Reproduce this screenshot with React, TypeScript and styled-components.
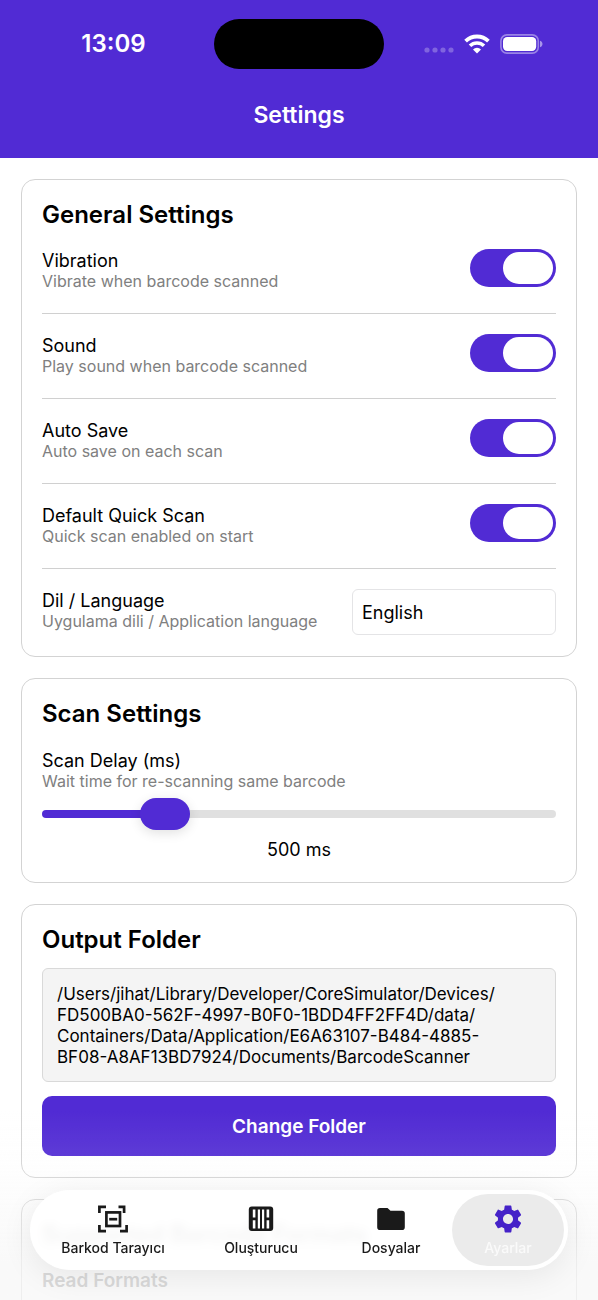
import React, { useState } from "react";
import styled, { createGlobalStyle } from "styled-components";

const PURPLE = "#512bd4";

const GlobalStyle = createGlobalStyle`
  * { box-sizing: border-box; }
  body {
    margin: 0;
    background: #fff;
    color: #000;
    font-family: Inter, "Liberation Sans", sans-serif;
  }
  button, input, select { font: inherit; }
`;

const Screen = styled.div`
  height: 100vh;
  display: flex;
  flex-direction: column;
`;

const Header = styled.header`
  flex: none;
  background: ${PURPLE};
  color: #fff;
`;

const StatusBar = styled.div`
  display: grid;
  grid-template-columns: 1fr 170px 1fr;
  align-items: center;
  padding: 19px 0 3px;
`;

const Clock = styled.time`
  justify-self: center;
  padding-left: 13px;
  font-size: 24px;
  line-height: 30px;
  font-weight: 600;
`;

const Island = styled.div`
  height: 50px;
  border-radius: 25px;
  background: #000;
`;

const StatusIcons = styled.div`
  justify-self: end;
  display: flex;
  align-items: center;
  gap: 10px;
  padding-right: 55px;

  svg { display: block; }
`;

const PageTitle = styled.h1`
  margin: 0;
  padding: 28px 0;
  text-align: center;
  font-size: 23px;
  line-height: 30px;
  font-weight: 600;
`;

const Content = styled.main`
  flex: 1;
  min-height: 0;
  overflow-y: auto;
  scrollbar-width: none;
  display: flex;
  flex-direction: column;
  gap: 21px;
  padding: 21px;
`;

const Card = styled.section`
  flex: none;
  padding: 20px 20px 21px;
  border: 1px solid #d3d3d3;
  border-radius: 14px;
  background: #fff;
`;

const CardTitle = styled.h2`
  margin: 0;
  font-size: 24px;
  line-height: 29px;
  font-weight: 600;
`;

const Row = styled.div<{ $last?: boolean }>`
  display: flex;
  align-items: flex-start;
  justify-content: space-between;
  padding: ${(p) => (p.$last ? "20px 0 0" : "20px 0 21px")};
  border-bottom: ${(p) => (p.$last ? "0" : "1px solid #d0d0d0")};
`;

const Labels = styled.label`
  display: block;
  padding-top: 1px;
`;

const Name = styled.span`
  display: block;
  font-size: 18px;
  line-height: 21px;
`;

const Hint = styled.span`
  display: block;
  font-size: 16px;
  line-height: 21px;
  color: #808080;
`;

const Toggle = styled.input`
  appearance: none;
  flex: none;
  display: flex;
  justify-content: flex-start;
  width: 86px;
  height: 38px;
  margin: 0;
  padding: 3px;
  border-radius: 19px;
  background: #d8d8dc;

  &::before {
    content: "";
    width: 50px;
    height: 32px;
    border-radius: 16px;
    background: #fff;
  }

  &:checked {
    justify-content: flex-end;
    background: ${PURPLE};
  }
`;

const Select = styled.select`
  appearance: none;
  width: 204px;
  height: 46px;
  padding: 0 9px;
  border: 1px solid #e4e4e6;
  border-radius: 6px;
  background: #fff;
  color: #000;
  font-size: 18px;
`;

const Field = styled.div`
  display: flex;
  flex-direction: column;
  padding-top: 21px;
`;

const Range = styled.input<{ $fill: number }>`
  appearance: none;
  width: 100%;
  height: 32px;
  margin: 6px 0 9px;
  background: transparent;

  &::-webkit-slider-runnable-track {
    height: 8px;
    border-radius: 4px;
    background: linear-gradient(
      to right,
      ${PURPLE} ${(p) => p.$fill}%,
      #e0e0e0 ${(p) => p.$fill}%
    );
  }

  &::-webkit-slider-thumb {
    appearance: none;
    width: 50px;
    height: 32px;
    margin-top: -12px;
    border-radius: 16px;
    background: ${PURPLE};
    box-shadow: 0 3px 12px rgba(0, 0, 0, 0.12);
  }
`;

const Value = styled.output`
  text-align: center;
  font-size: 18px;
  line-height: 22px;
`;

const PathBox = styled.p`
  margin: 14px 0;
  padding: 15px 14px 13px;
  border: 1px solid #d9d9d9;
  border-radius: 6px;
  background: #f4f4f4;
  font-size: 17px;
  line-height: 21px;
`;

const PrimaryButton = styled.button`
  display: block;
  width: 100%;
  height: 60px;
  border: 0;
  border-radius: 10px;
  background: ${PURPLE};
  color: #fff;
  font-size: 19px;
  font-weight: 600;
`;

const Subheading = styled.h3`
  margin: 20px 0 0;
  font-size: 19px;
  line-height: 24px;
  font-weight: 600;
  color: #808080;
`;

const Dock = styled.div`
  position: fixed;
  inset: auto 0 0;
  padding: 80px 30px 30px;
  background: linear-gradient(
    rgba(247, 247, 247, 0),
    rgba(247, 247, 247, 0.08) 24%,
    rgba(247, 247, 247, 0.3) 46%,
    rgba(247, 247, 247, 0.75) 80%
  );
`;

const TabBar = styled.nav`
  display: grid;
  grid-template-columns: 158fr 138fr 122fr 112fr;
  padding: 4px;
  border-radius: 40px;
  background: rgba(255, 255, 255, 0.9);
  backdrop-filter: blur(4px);
  box-shadow: 0 6px 32px rgba(0, 0, 0, 0.08);
`;

const Tab = styled.a<{ $active?: boolean }>`
  display: flex;
  flex-direction: column;
  align-items: center;
  gap: 6px;
  height: 72px;
  padding-top: 11px;
  border-radius: 36px;
  background: ${(p) => (p.$active ? "#ebebeb" : "transparent")};
  color: ${(p) => (p.$active ? "#fafafa" : "#1a1a1a")};
  font-size: 14px;
  line-height: 18px;
  font-weight: 500;
  text-decoration: none;

  svg {
    display: block;
    color: ${(p) => (p.$active ? "#4522c8" : "#1a1a1a")};
  }
`;

const SignalIcon = () => (
  <svg width="30" height="22" viewBox="0 0 30 22" fill="#fff" fillOpacity="0.27" aria-hidden="true">
    <circle cx="3" cy="17" r="2.6" />
    <circle cx="11" cy="17" r="2.6" />
    <circle cx="19" cy="17" r="2.6" />
    <circle cx="27" cy="17" r="2.6" />
  </svg>
);

const WifiIcon = () => (
  <svg width="26" height="20" viewBox="0 0 26 20" fill="none" stroke="#fff" aria-hidden="true">
    <path d="M1.6 7.2a16.2 16.2 0 0 1 22.8 0" strokeWidth="3.8" />
    <path d="M6 11.8a10 10 0 0 1 14 0" strokeWidth="3.6" />
    <path d="M13 19.6l-4-4.2a5.8 5.8 0 0 1 8 0z" fill="#fff" stroke="none" />
  </svg>
);

const BatteryIcon = () => (
  <svg width="43" height="20" viewBox="0 0 43 20" aria-hidden="true">
    <rect x="0.9" y="0.9" width="37.4" height="18.2" rx="6" fill="none" stroke="#fff" strokeOpacity="0.42" strokeWidth="1.6" />
    <rect x="3" y="3" width="33.2" height="14" rx="4.2" fill="#fff" />
    <path d="M40 6.8c1.6.5 2.5 1.7 2.5 3.2s-.9 2.7-2.5 3.2z" fill="#fff" fillOpacity="0.5" />
  </svg>
);

const ScanIcon = () => (
  <svg width="30" height="28" viewBox="0 0 30 28" fill="none" stroke="currentColor" strokeWidth="2.7" aria-hidden="true">
    <path d="M1.4 8V1.9H8M20.5 1.9H26.1V8M1.400 20V26.100H8M22 26.100H28.600V20" />
    <rect x="8.400" y="7.400" width="13.600" height="13.600" />
    <path d="M11.200 14.200h8" />
  </svg>
);

const BarcodeIcon = () => (
  <svg width="26" height="28" viewBox="0 0 26 28" aria-hidden="true">
    <rect x="0.8" y="1.500" width="24.4" height="24.4" rx="3" fill="currentColor" />
    <path d="M4.800 4.500h2.600v8h-2.600zM4.800 15.200h2.600v8.200h-2.600zM9.800 4.500h2.200v18.900h-2.200zM14 4.500h2.200v18.900h-2.200zM18.600 4.500h2.600v8h-2.600zM18.600 15.200h2.600v8.200h-2.600z" fill="#fff" />
  </svg>
);

const FolderIcon = () => (
  <svg width="28" height="28" viewBox="0 0 28 28" fill="currentColor" aria-hidden="true">
    <path d="M3 3h7.500l3 2.800H25A2.800 2.800 0 0 1 27.800 8.600V22.200A2.800 2.800 0 0 1 25 25H3A2.800 2.800 0 0 1 .2 22.200V5.800A2.800 2.800 0 0 1 3 3z" />
  </svg>
);

const GearIcon = () => (
  <svg width="28" height="28" viewBox="2 2 20 20" fill="currentColor" aria-hidden="true">
    <path d="M19.140 12.940c.040-.300.060-.610.060-.940 0-.320-.020-.640-.070-.940l2.030-1.580a.49.49 0 0 0 .120-.610l-1.920-3.320a.488.488 0 0 0-.590-.220l-2.390.960c-.500-.380-1.030-.700-1.620-.940l-.360-2.540a.484.484 0 0 0-.480-.410h-3.840c-.240 0-.430.170-.470.410l-.360 2.540c-.590.240-1.130.570-1.620.940l-2.390-.960c-.220-.080-.470 0-.590.220L2.740 8.870c-.120.210-.080.470.120.610l2.030 1.580c-.050.300-.090.630-.090.940s.020.640.070.940l-2.030 1.580a.49.49 0 0 0-.120.610l1.920 3.320c.120.220.370.290.590.220l2.390-.960c.500.380 1.030.700 1.620.940l.360 2.540c.050.240.240.410.480.410h3.840c.240 0 .440-.170.470-.410l.360-2.540c.590-.240 1.130-.560 1.620-.940l2.390.960c.220.080.470 0 .590-.220l1.920-3.320c.120-.220.070-.470-.120-.610l-2.010-1.580zM12 15.600A3.610 3.610 0 0 1 8.400 12c0-1.980 1.620-3.600 3.600-3.600s3.600 1.620 3.600 3.600-1.620 3.600-3.600 3.600z" />
  </svg>
);

const SWITCHES = [
  { id: "vibration", name: "Vibration", hint: "Vibrate when barcode scanned" },
  { id: "sound", name: "Sound", hint: "Play sound when barcode scanned" },
  { id: "autosave", name: "Auto Save", hint: "Auto save on each scan" },
  { id: "quickscan", name: "Default Quick Scan", hint: "Quick scan enabled on start" },
];

const TABS = [
  { label: "Barkod Tarayıcı", href: "#scanner", icon: <ScanIcon /> },
  { label: "Oluşturucu", href: "#generator", icon: <BarcodeIcon /> },
  { label: "Dosyalar", href: "#files", icon: <FolderIcon /> },
  { label: "Ayarlar", href: "#settings", icon: <GearIcon />, active: true },
];

const MIN_DELAY = 100;
const MAX_DELAY = 2000;

export default function App() {
  const [delay, setDelay] = useState(500);
  const fill = ((delay - MIN_DELAY) / (MAX_DELAY - MIN_DELAY)) * 90 + 5;

  return (
    <Screen>
      <GlobalStyle />
      <Header>
        <StatusBar>
          <Clock>13:09</Clock>
          <Island />
          <StatusIcons>
            <SignalIcon />
            <WifiIcon />
            <BatteryIcon />
          </StatusIcons>
        </StatusBar>
        <PageTitle>Settings</PageTitle>
      </Header>

      <Content>
        <Card>
          <CardTitle>General Settings</CardTitle>
          {SWITCHES.map((s) => (
            <Row key={s.id}>
              <Labels htmlFor={s.id}>
                <Name>{s.name}</Name>
                <Hint>{s.hint}</Hint>
              </Labels>
              <Toggle id={s.id} type="checkbox" defaultChecked />
            </Row>
          ))}
          <Row $last>
            <Labels htmlFor="language">
              <Name>Dil / Language</Name>
              <Hint>Uygulama dili / Application language</Hint>
            </Labels>
            <Select id="language" defaultValue="en">
              <option value="en">English</option>
              <option value="tr">Türkçe</option>
            </Select>
          </Row>
        </Card>

        <Card>
          <CardTitle>Scan Settings</CardTitle>
          <Field>
            <Labels htmlFor="delay">
              <Name>Scan Delay (ms)</Name>
              <Hint>Wait time for re-scanning same barcode</Hint>
            </Labels>
            <Range
              id="delay"
              type="range"
              min={MIN_DELAY}
              max={MAX_DELAY}
              step={100}
              value={delay}
              $fill={fill}
              onChange={(e) => setDelay(Number(e.target.value))}
            />
            <Value htmlFor="delay">{delay} ms</Value>
          </Field>
        </Card>

        <Card>
          <CardTitle>Output Folder</CardTitle>
          <PathBox>
            /Users/jihat/Library/Developer/CoreSimulator/Devices/
            <br />
            FD500BA0-562F-4997-B0F0-1BDD4FF2FF4D/data/
            <br />
            Containers/Data/Application/E6A63107-B484-4885-
            <br />
            BF08-A8AF13BD7924/Documents/BarcodeScanner
          </PathBox>
          <PrimaryButton type="button">Change Folder</PrimaryButton>
        </Card>

        <Card>
          <CardTitle>Supported Barcode Formats</CardTitle>
          <Subheading>Read Formats</Subheading>
        </Card>
      </Content>

      <Dock>
        <TabBar>
          {TABS.map((t) => (
            <Tab key={t.label} href={t.href} $active={t.active}>
              {t.icon}
              {t.label}
            </Tab>
          ))}
        </TabBar>
      </Dock>
    </Screen>
  );
}
